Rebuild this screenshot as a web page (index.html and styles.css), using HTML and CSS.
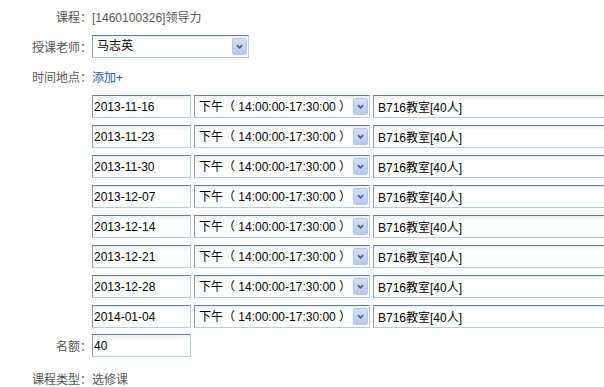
FILE: index.html
```html
<!DOCTYPE html>
<html lang="zh-CN">
<head>
    <meta charset="UTF-8">
    <title>课程安排</title>
    <link rel="stylesheet" href="styles.css">
</head>
<body>
    <div class="form">
        <div class="row">
            <span class="label">课程：</span>
            <span class="value">[1460100326]领导力</span>
        </div>

        <div class="row">
            <label class="label" for="teacher">授课老师：</label>
            <span class="select-wrap">
                <select id="teacher" class="teacher"><option>马志英</option></select>
                <svg class="arrow" width="15" height="17" viewBox="0 0 15 17"><path d="M4.5 7 L7.5 10 L10.5 7" fill="none" stroke="#4a5f86" stroke-width="2"/></svg>
            </span>
        </div>

        <div class="row">
            <span class="label">时间地点：</span>
            <a class="add" href="#">添加+</a>
        </div>

        <div class="schedule" id="schedule"></div>

        <div class="row quota">
            <span class="label">名额：</span>
            <input class="count" type="text" value="40">
        </div>

        <div class="row last">
            <span class="label">课程类型：</span>
            <span class="value">选修课</span>
        </div>
    </div>

    <script>
        const dates = ['2013-11-16', '2013-11-23', '2013-11-30', '2013-12-07',
                       '2013-12-14', '2013-12-21', '2013-12-28', '2014-01-04'];
        const schedule = document.getElementById('schedule');
        dates.forEach(function (d) {
            schedule.innerHTML += `
                <div class="slot">
                    <input class="date" type="text" value="${d}">
                    <span class="select-wrap">
                        <select class="period"><option>下午（ 14:00:00-17:30:00 ）</option></select>
                        <svg class="arrow" width="15" height="17" viewBox="0 0 15 17"><path d="M4.5 7 L7.5 10 L10.5 7" fill="none" stroke="#4a5f86" stroke-width="2"/></svg>
                    </span>
                    <input class="room" type="text" value="B716教室[40人]">
                </div>`;
        });
    </script>
</body>
</html>
```

FILE: styles.css
```css
* {
    margin: 0;
    padding: 0;
    box-sizing: border-box;
}

body {
    font-family: "Liberation Sans", "Noto Sans CJK SC", sans-serif;
    font-size: 12px;
    color: #555;
    background: #fff;
    overflow: hidden;
}

.form {
    padding-top: 1px;
}

.row {
    display: flex;
    align-items: center;
    height: 30px;
}

.label {
    width: 92px;
    text-align: right;
    flex-shrink: 0;
}

.add {
    color: #1a5ea8;
    text-decoration: none;
}

input,
select {
    font-family: inherit;
    font-size: 12px;
    color: #000;
    height: 23px;
    border: 1px solid;
    border-color: #6b7b90 #b9cad9 #b9cad9 #8898ab;
    background: linear-gradient(#eceef2, #fff 5px);
    outline: none;
}

input {
    padding: 0 4px;
}

select {
    appearance: none;
    -webkit-appearance: none;
    padding: 0 20px 0 4px;
}

.select-wrap {
    position: relative;
    display: inline-block;
    height: 23px;
}

.arrow {
    position: absolute;
    right: 2px;
    top: 3px;
    background: linear-gradient(#d4e0f8, #b7c9ef);
    border: 1px solid #b3c5ea;
    border-radius: 2px;
    pointer-events: none;
}

.teacher {
    width: 157px;
}

.schedule {
    display: flex;
    flex-direction: column;
    gap: 7px;
    padding: 4px 0 0 92px;
}

.slot {
    display: flex;
    gap: 3px;
}

.date {
    width: 99px;
    padding-left: 1px;
}

.period {
    width: 176px;
}

.room {
    width: 240px;
    flex-shrink: 0;
}

.quota {
    height: 23px;
    margin-top: 6px;
}

.count {
    width: 99px;
    padding-left: 1px;
}

.last {
    margin-top: 6px;
}
```
